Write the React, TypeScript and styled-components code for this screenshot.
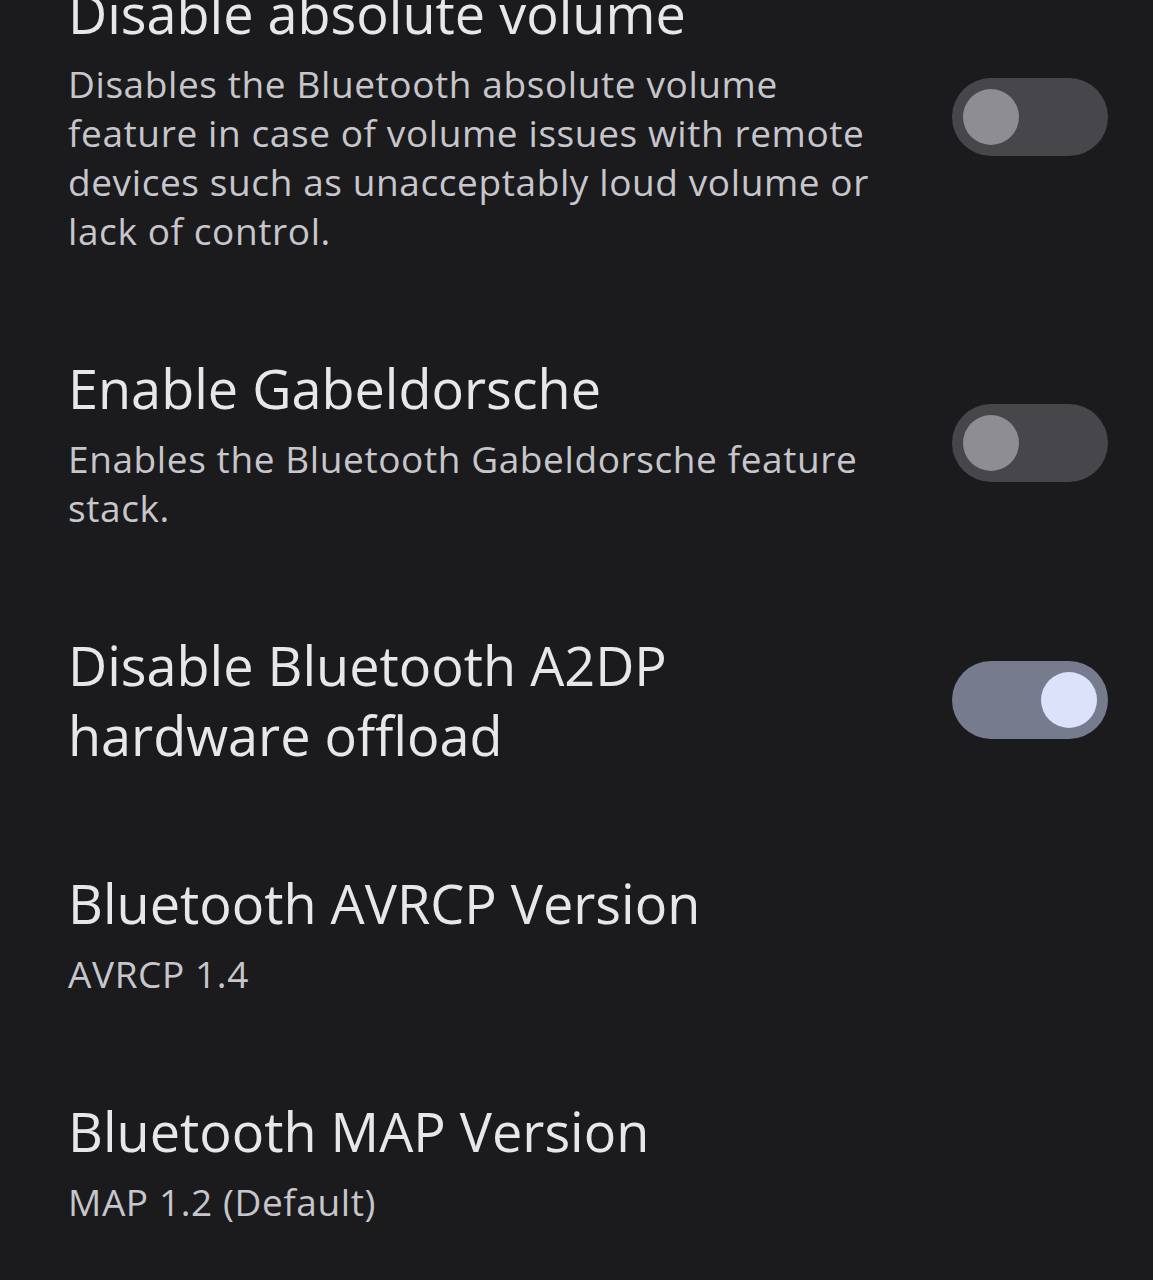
import React from 'react';
import styled, { createGlobalStyle } from 'styled-components';

const GlobalStyle = createGlobalStyle`
  html, body {
    margin: 0;
    padding: 0;
    background: #1b1b1d;
  }
  body {
    -webkit-font-smoothing: antialiased;
  }
`;

const Screen = styled.div`
  width: 1153px;
  height: 1280px;
  overflow: hidden;
  background: #1b1b1d;
`;

// the list is scrolled a little, so the first row's title sits under the top edge
const PrefList = styled.div`
  display: flex;
  flex-direction: column;
  margin-top: -71px;
`;

const PrefRow = styled.div`
  display: flex;
  align-items: center;
  padding: 49px 45px 49px 68px;
`;

const PrefText = styled.div`
  flex: 1;
  min-width: 0;
  padding-right: 58px;
`;

const PrefTitle = styled.div`
  font-family: 'Open Sans', 'Noto Sans', sans-serif;
  font-size: 54px;
  line-height: 70px;
  color: #e8e6eb;
`;

const PrefSummary = styled.div`
  margin-top: 11px;
  font-family: 'Open Sans', 'Noto Sans', sans-serif;
  font-size: 37px;
  letter-spacing: 0.6px;
  line-height: 49px;
  color: #c7c6cc;
`;

const Track = styled.div<{ $on: boolean }>`
  flex: none;
  box-sizing: border-box;
  width: 156px;
  height: 78px;
  border-radius: 39px;
  padding: 0 11px;
  display: flex;
  align-items: center;
  justify-content: ${(p) => (p.$on ? 'flex-end' : 'flex-start')};
  background: ${(p) => (p.$on ? '#767b8e' : '#47464b')};
`;

const Thumb = styled.div<{ $on: boolean }>`
  width: 56px;
  height: 56px;
  border-radius: 50%;
  background: ${(p) => (p.$on ? '#dce2f9' : '#8e8d93')};
`;

interface Pref {
  title: string;
  summary?: string;
  toggle?: boolean;
}

const prefs: Pref[] = [
  {
    title: 'Disable absolute volume',
    summary:
      'Disables the Bluetooth absolute volume feature in case of volume issues with remote devices such as unacceptably loud volume or lack of control.',
    toggle: false,
  },
  {
    title: 'Enable Gabeldorsche',
    summary: 'Enables the Bluetooth Gabeldorsche feature stack.',
    toggle: false,
  },
  {
    title: 'Disable Bluetooth A2DP hardware offload',
    toggle: true,
  },
  {
    title: 'Bluetooth AVRCP Version',
    summary: 'AVRCP 1.4',
  },
  {
    title: 'Bluetooth MAP Version',
    summary: 'MAP 1.2 (Default)',
  },
];

const Switch: React.FC<{ on: boolean }> = ({ on }) => (
  <Track $on={on}>
    <Thumb $on={on} />
  </Track>
);

const App: React.FC = () => {
  return (
    <Screen>
      <GlobalStyle />
      <PrefList>
        {prefs.map((pref) => (
          <PrefRow key={pref.title}>
            <PrefText>
              <PrefTitle>{pref.title}</PrefTitle>
              {pref.summary && <PrefSummary>{pref.summary}</PrefSummary>}
            </PrefText>
            {pref.toggle !== undefined && <Switch on={pref.toggle} />}
          </PrefRow>
        ))}
      </PrefList>
    </Screen>
  );
};

export default App;
